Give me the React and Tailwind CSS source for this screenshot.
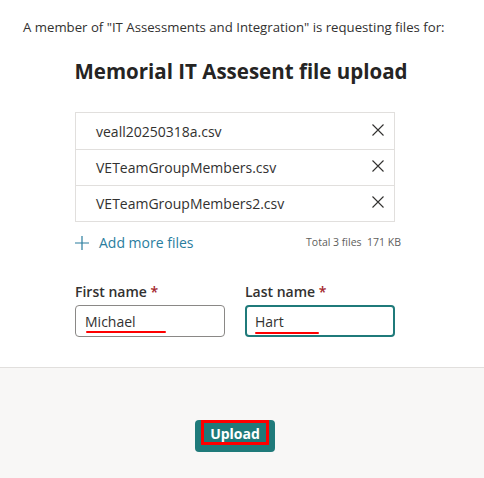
import React from 'react';

const files = ['veall20250318a.csv', 'VETeamGroupMembers.csv', 'VETeamGroupMembers2.csv'];

function XIcon() {
  return (
    <svg width="12" height="12" viewBox="0 0 12 12" fill="none" stroke="#323130" strokeWidth="1.1">
      <path d="M0.5 0.5 L11.5 11.5 M11.5 0.5 L0.5 11.5" />
    </svg>
  );
}

function PlusIcon() {
  return (
    <svg width="14" height="14" viewBox="0 0 14 14" fill="none" stroke="#2a7d9e" strokeWidth="1.2">
      <path d="M7 0 V14 M0 7 H14" />
    </svg>
  );
}

export default function App() {
  return (
    <div className="w-[484px] h-[478px] flex flex-col bg-white text-[#323130]" style={{ fontFamily: '"Open Sans", "Noto Sans", sans-serif' }}>
      <div className="flex flex-col h-[368px] border-b border-[#e1dfdd]">
        <p className="pl-[23px] pt-[17px] text-[13.2px] leading-[20px] text-[#323130]">
          A member of "IT Assessments and Integration" is requesting files for:
        </p>
        <h1 className="mt-[20px] text-center text-[20.5px] leading-[28px] font-bold text-[#252423] pr-[2px]">
          Memorial IT Assesent file upload
        </h1>

        <div className="mt-[27px] ml-[75px] w-[320px] border border-[#e1dfdd]">
          {files.map((f, i) => (
            <div key={f} className={`h-[36px] flex items-center justify-between pl-[20px] pr-[10px] ${i > 0 ? 'border-t border-[#e1dfdd]' : ''}`}>
              <span className="text-[14px] text-[#323130]">{f}</span>
              <span className="mb-[3px]"><XIcon /></span>
            </div>
          ))}
        </div>

        <div className="ml-[75px] w-[326px] mt-[10px] flex items-center justify-between">
          <div className="flex items-center gap-[10px]">
            <PlusIcon />
            <span className="text-[14px] text-[#2a7d9e]">Add more files</span>
          </div>
          <span className="text-[10.5px] text-[#605e5c]">Total 3 files&nbsp; 171 KB</span>
        </div>

        <div className="ml-[75px] mt-[29px] flex gap-[20px]">
          <div className="flex flex-col w-[150px]">
            <label className="text-[14px] font-semibold leading-[20px] text-[#323130]">
              First name <span className="text-[#a4262c]">*</span>
            </label>
            <div className="relative mt-[3px] h-[32px] rounded-[4px] border border-[#8a8886] flex items-center pl-[9px] text-[14px]">
              Michael
              <span className="absolute left-[10px] top-[25px] w-[80px] h-[2px] bg-[#ff0000] rounded-full" />
            </div>
          </div>
          <div className="flex flex-col w-[150px]">
            <label className="text-[14px] font-semibold leading-[20px] text-[#323130]">
              Last name <span className="text-[#a4262c]">*</span>
            </label>
            <div className="relative mt-[3px] h-[32px] rounded-[4px] border-2 border-[#1f7a7a] flex items-center pl-[8px] text-[14px]">
              Hart
              <span className="absolute left-[8px] top-[25px] w-[64px] h-[2px] bg-[#ff0000] rounded-full" />
            </div>
          </div>
        </div>
      </div>

      <div className="flex-1 bg-[#f8f7f6] flex justify-center pt-[52px] pr-[14px]">
        <button className="relative w-[80px] h-[32px] rounded-[4px] bg-[#1f7a7a] text-white font-bold text-[14px] flex items-start justify-center">
          <span className="w-[68px] h-[25px] border-[3px] border-[#ff0000] flex items-center justify-center leading-none pt-[2px]">
            Upload
          </span>
        </button>
      </div>
    </div>
  );
}
